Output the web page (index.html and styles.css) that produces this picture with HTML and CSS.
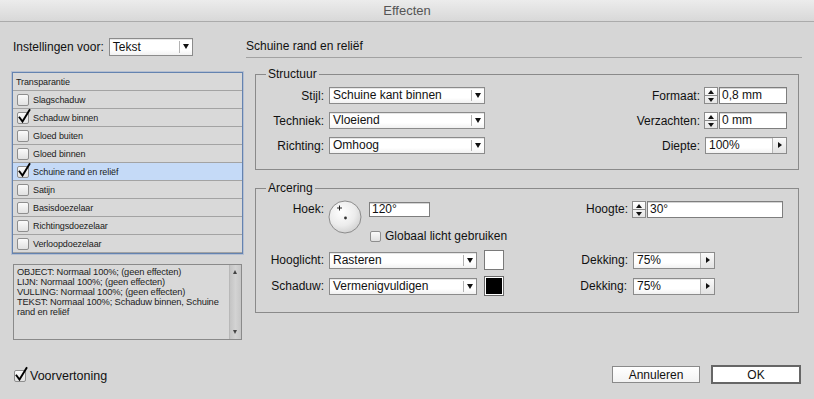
FILE: index.html
```html
<!DOCTYPE html>
<html lang="nl">
<head>
<meta charset="utf-8">
<title>Effecten</title>
<link rel="stylesheet" href="styles.css">
</head>
<body>
<div class="titlebar">Effecten</div>
<div class="main">
  <div class="left">
    <div class="settings">
      <span class="lbl">Instellingen voor:</span>
      <div class="dd dd-tekst"><span class="dd-val">Tekst</span><span class="dd-arrow"></span></div>
    </div>
    <ul class="effects">
      <li class="row row-head">Transparantie</li>
      <li class="row"><span class="cb"></span>Slagschaduw</li>
      <li class="row"><span class="cb"><svg class="tick" viewBox="0 0 14 14" width="14" height="14"><path d="M2.5 6.5 L5.5 10.5 L12.5 -1"/></svg></span>Schaduw binnen</li>
      <li class="row"><span class="cb"></span>Gloed buiten</li>
      <li class="row"><span class="cb"></span>Gloed binnen</li>
      <li class="row row-sel"><span class="cb"><svg class="tick" viewBox="0 0 14 14" width="14" height="14"><path d="M2.5 6.5 L5.5 10.5 L12.5 -1"/></svg></span>Schuine rand en reliëf</li>
      <li class="row"><span class="cb"></span>Satijn</li>
      <li class="row"><span class="cb"></span>Basisdoezelaar</li>
      <li class="row"><span class="cb"></span>Richtingsdoezelaar</li>
      <li class="row"><span class="cb"></span>Verloopdoezelaar</li>
    </ul>
    <div class="summary">
      <div class="summary-text">OBJECT: Normaal 100%; (geen effecten)<br>LIJN: Normaal 100%; (geen effecten)<br>VULLING: Normaal 100%; (geen effecten)<br>TEKST: Normaal 100%; Schaduw binnen, Schuine<br>rand en reliëf</div>
      <div class="scrollbar"><span class="sb-up"></span><span class="sb-down"></span></div>
    </div>
  </div>
  <div class="right">
    <div class="heading">Schuine rand en reliëf</div>
    <fieldset class="group group-struct">
      <legend>Structuur</legend>
      <div class="struct">
        <div class="grid-left">
          <span class="lbl-r">Stijl:</span>
          <div class="dd"><span class="dd-val">Schuine kant binnen</span><span class="dd-arrow"></span></div>
          <span class="lbl-r">Techniek:</span>
          <div class="dd"><span class="dd-val">Vloeiend</span><span class="dd-arrow"></span></div>
          <span class="lbl-r">Richting:</span>
          <div class="dd"><span class="dd-val">Omhoog</span><span class="dd-arrow"></span></div>
        </div>
        <div class="grid-right">
          <span class="lbl-r">Formaat:</span>
          <span class="spin"><i class="spin-up"></i><i class="spin-dn"></i></span>
          <div class="inp">0,8 mm</div>
          <span class="lbl-r">Verzachten:</span>
          <span class="spin"><i class="spin-up"></i><i class="spin-dn"></i></span>
          <div class="inp">0 mm</div>
          <span class="lbl-r">Diepte:</span>
          <div class="dd dd-menu span2"><span class="dd-val">100%</span><span class="dd-btn"></span></div>
        </div>
      </div>
    </fieldset>
    <fieldset class="group group-shade">
      <legend>Arcering</legend>
      <div class="shade">
        <span class="lbl-r lbl-hoek">Hoek:</span>
        <div class="angle">
          <svg class="dial" viewBox="0 0 34 34" width="34" height="34">
            <defs>
              <radialGradient id="dialg" cx="0.4" cy="0.35" r="0.7">
                <stop offset="0" stop-color="#ffffff"/>
                <stop offset="0.6" stop-color="#ececec"/>
                <stop offset="1" stop-color="#cfcfcf"/>
              </radialGradient>
            </defs>
            <circle cx="17" cy="17" r="16" fill="url(#dialg)" stroke="#8c8c8c" stroke-width="1"/>
            <circle cx="17.5" cy="18" r="1.4" fill="#333"/>
            <path d="M11.5 5.5 V10.5 M9 8 H14" stroke="#222" stroke-width="1"/>
          </svg>
          <div class="angle-side">
            <div class="inp inp-small">120°</div>
            <div class="check-line"><span class="cb cb-plain"></span><span class="check-text">Globaal licht gebruiken</span></div>
          </div>
        </div>
        <span class="lbl-r lbl-hoogte">Hoogte:</span>
        <div class="hoogte">
          <span class="spin"><i class="spin-up"></i><i class="spin-dn"></i></span>
          <div class="inp inp-wide">30°</div>
        </div>

        <span class="lbl-r">Hooglicht:</span>
        <div class="dd dd-mode"><span class="dd-val">Rasteren</span><span class="dd-arrow"></span></div>
        <span class="swatch swatch-white"></span>
        <span class="lbl-r">Dekking:</span>
        <div class="dd dd-menu dd-pct"><span class="dd-val">75%</span><span class="dd-btn"></span></div>

        <span class="lbl-r">Schaduw:</span>
        <div class="dd dd-mode"><span class="dd-val">Vermenigvuldigen</span><span class="dd-arrow"></span></div>
        <span class="swatch swatch-black"></span>
        <span class="lbl-r">Dekking:</span>
        <div class="dd dd-menu dd-pct"><span class="dd-val">75%</span><span class="dd-btn"></span></div>
      </div>
    </fieldset>
  </div>
</div>
<div class="footer">
  <div class="preview"><span class="cb cb-preview"><svg class="tick" viewBox="0 0 14 14" width="14" height="14"><path d="M2.5 6.5 L5.5 10.5 L12.5 -1"/></svg></span><span class="preview-text">Voorvertoning</span></div>
  <div class="buttons">
    <button class="btn btn-cancel" type="button">Annuleren</button>
    <button class="btn btn-ok" type="button">OK</button>
  </div>
</div>
</body>
</html>
```
FILE: styles.css
```css
html, body {
  margin: 0;
  padding: 0;
}
body {
  width: 814px;
  height: 399px;
  overflow: hidden;
  background: #d6d6d6;
  font-family: "Liberation Sans", Arial, sans-serif;
  font-size: 12px;
  color: #111;
  display: flex;
  flex-direction: column;
}
.titlebar {
  height: 21px;
  line-height: 21px;
  text-align: center;
  font-size: 13px;
  color: #555;
  background: linear-gradient(#ececec, #d8d8d8);
  border-bottom: 1px solid #ababab;
  flex: none;
}
.main {
  display: flex;
  gap: 3px;
  padding: 16px 12px 0 12px;
}
.left {
  width: 231px;
  flex: none;
}
.right {
  width: 556px;
  flex: none;
}
.settings {
  display: flex;
  align-items: center;
  height: 17px;
}
.lbl {
  padding-left: 1px;
  margin-right: 5px;
  white-space: nowrap;
}
.dd {
  display: flex;
  align-items: stretch;
  height: 17px;
  box-sizing: border-box;
  border: 1px solid #8b8b8b;
  background: linear-gradient(#ffffff, #ffffff 65%, #f1f1f1);
  box-shadow: inset 0 1px 0 #e6e6e6;
}
.dd-val {
  flex: 1;
  padding-left: 3px;
  line-height: 15px;
  white-space: nowrap;
  overflow: hidden;
}
.dd-arrow {
  width: 13px;
  position: relative;
  flex: none;
}
.dd-arrow::before {
  content: "";
  position: absolute;
  left: 0;
  top: 2px;
  bottom: 2px;
  width: 1px;
  background: #b3b3b3;
}
.dd-arrow::after {
  content: "";
  position: absolute;
  left: 4px;
  top: 5px;
  border-left: 3px solid transparent;
  border-right: 3px solid transparent;
  border-top: 5px solid #111;
}
.dd-tekst {
  width: 84px;
  height: 18px;
}
.dd-tekst .dd-val {
  line-height: 16px;
}
.dd-btn {
  width: 13px;
  flex: none;
  position: relative;
  border-left: 1px solid #b5b5b5;
  background: linear-gradient(#fafafa, #e2e2e2);
}
.dd-btn::after {
  content: "";
  position: absolute;
  left: 5px;
  top: 4px;
  border-top: 3.5px solid transparent;
  border-bottom: 3.5px solid transparent;
  border-left: 4px solid #111;
}
.effects {
  list-style: none;
  margin: 17px 0 0 0;
  padding: 0;
  border: 1px solid #6483b0;
  box-shadow: 0 0 0 1px rgba(120, 150, 200, 0.35);
  background: #d9d9d9;
}
.row {
  display: flex;
  align-items: center;
  height: 17px;
  border-bottom: 1px solid #a3a3a3;
  padding-left: 4px;
  font-size: 9px;
  letter-spacing: -0.1px;
  color: #1a1a1a;
  white-space: nowrap;
}
.row-head {
  padding-left: 3px;
}
.row-sel {
  background: #c5daf7;
}
.cb {
  width: 12px;
  height: 12px;
  box-sizing: border-box;
  border: 1px solid #8e8e8e;
  border-radius: 2px;
  background: linear-gradient(#fbfbfb, #e1e1e1);
  position: relative;
  flex: none;
}
.row .cb {
  margin-right: 4px;
}
.tick {
  position: absolute;
  left: -1px;
  top: -2px;
  overflow: visible;
}
.tick path {
  fill: none;
  stroke: #000;
  stroke-width: 1.9;
  stroke-linecap: square;
  stroke-linejoin: miter;
}
.summary {
  margin: 10px 0 0 1px;
  width: 229px;
  height: 76px;
  box-sizing: border-box;
  border: 1px solid #8a8a8a;
  display: flex;
  background: #d9d9d9;
}
.summary-text {
  flex: 1;
  padding: 2px 0 0 3px;
  font-size: 9.3px;
  line-height: 10px;
  letter-spacing: -0.15px;
  color: #222;
  white-space: nowrap;
}
.scrollbar {
  width: 11px;
  flex: none;
  background: linear-gradient(90deg, #c4c4c4, #d3d3d3 50%, #c6c6c6);
  border-left: 1px solid #b8b8b8;
  position: relative;
}
.sb-up, .sb-down {
  position: absolute;
  left: 3px;
  border-left: 2.5px solid transparent;
  border-right: 2.5px solid transparent;
}
.sb-up {
  top: 5px;
  border-bottom: 4px solid #444;
}
.sb-down {
  bottom: 5px;
  border-top: 4px solid #444;
}
.heading {
  line-height: 17px;
  padding-bottom: 2px;
  border-bottom: 1px solid #a2a2a2;
  white-space: nowrap;
}
.group {
  margin: 0 3px 0 9px;
  border: 1px solid #8a8a8a;
  padding: 5px 11px 15px 6px;
  min-width: 0;
}
.group legend {
  margin-left: 4px;
  padding: 0 2px;
  line-height: 14px;
}
.group-struct {
  margin-top: 9px;
  padding-top: 6px;
}
.group-shade {
  margin-top: 11px;
  padding: 5px 15px 16px 6px;
}
.struct {
  display: flex;
  justify-content: space-between;
}
.grid-left {
  display: grid;
  grid-template-columns: 62px 156px;
  grid-auto-rows: 17px;
  column-gap: 5px;
  row-gap: 8px;
}
.grid-right {
  display: grid;
  grid-template-columns: auto 14px 68px;
  grid-auto-rows: 17px;
  column-gap: 1px;
  row-gap: 8px;
}
.lbl-r {
  text-align: right;
  white-space: nowrap;
  align-self: center;
}
.grid-right .lbl-r {
  padding-right: 3px;
}
.span2 {
  grid-column: 2 / 4;
  margin-left: 1px;
}
.spin {
  width: 14px;
  height: 17px;
  box-sizing: border-box;
  border: 1px solid #8b8b8b;
  background: linear-gradient(#ffffff, #e6e6e6);
  display: flex;
  flex-direction: column;
}
.spin-up, .spin-dn {
  flex: 1;
  position: relative;
}
.spin-up {
  border-bottom: 1px solid #8b8b8b;
}
.spin-up::after, .spin-dn::after {
  content: "";
  position: absolute;
  left: 3px;
  border-left: 3px solid transparent;
  border-right: 3px solid transparent;
}
.spin-up::after {
  top: 2px;
  border-bottom: 4px solid #111;
}
.spin-dn::after {
  top: 2px;
  border-top: 4px solid #111;
}
.inp {
  height: 17px;
  box-sizing: border-box;
  border: 1px solid #7e7e7e;
  background: #fff;
  box-shadow: inset 0 1px 0 #d4d4d4;
  padding-left: 2px;
  line-height: 15px;
  white-space: nowrap;
}
.shade {
  display: grid;
  grid-template-columns: 67px 155px 20px 128px 151px;
  grid-template-rows: 44px 20px 20px;
  row-gap: 6px;
}
.shade > .lbl-r {
  padding-right: 5px;
}
.shade > .lbl-r:nth-child(4n) {
  padding-right: 4px;
}
.lbl-hoek {
  align-self: start;
  margin-top: 2px;
  line-height: 15px;
}
.lbl-hoogte {
  align-self: start;
  margin-top: 1px;
  line-height: 17px;
  padding-right: 4px !important;
}
.angle {
  grid-column: 2 / 4;
  display: flex;
  align-items: flex-start;
}
.dial {
  margin-left: -1px;
  flex: none;
}
.angle-side {
  margin-left: 7px;
  padding-top: 2px;
}
.inp-small {
  width: 61px;
  height: 15px;
  line-height: 13px;
}
.check-line {
  display: flex;
  align-items: center;
  margin-top: 12px;
  margin-left: 1px;
  white-space: nowrap;
}
.cb-plain {
  width: 11px;
  height: 11px;
}
.check-text {
  margin-left: 4px;
}
.hoogte {
  display: flex;
  gap: 1px;
  align-self: start;
  margin-top: 1px;
}
.inp-wide {
  width: 136px;
}
.dd-mode {
  width: 148px;
  align-self: center;
}
.dd-pct {
  width: 82px;
  margin-left: 1px;
  align-self: center;
}
.swatch {
  width: 20px;
  height: 20px;
  box-sizing: border-box;
  border: 1px solid #7a7a7a;
}
.swatch-white {
  background: #fff;
}
.swatch-black {
  background: #000;
  box-shadow: inset 0 0 0 1px #fff;
  border-color: #6a6a6a;
}
.footer {
  margin-top: auto;
  display: flex;
  align-items: center;
  justify-content: space-between;
  padding: 0 13px 15px 14px;
}
.preview {
  display: flex;
  align-items: center;
  margin-top: 3px;
}
.cb-preview {
  width: 12px;
  height: 12px;
}
.preview-text {
  margin-left: 4px;
  font-size: 12.5px;
}
.buttons {
  display: flex;
  align-items: center;
  gap: 11px;
}
.btn {
  font-family: "Liberation Sans", Arial, sans-serif;
  font-size: 12px;
  color: #111;
  margin: 0;
  padding: 0;
  box-sizing: border-box;
  background: linear-gradient(#ffffff, #f2f2f2);
  border: 1px solid #8a8a8a;
  border-radius: 0;
}
.btn-cancel {
  width: 88px;
  height: 17px;
}
.btn-ok {
  width: 90px;
  height: 19px;
  border: 2px solid #666;
  background: #fff;
}
```
